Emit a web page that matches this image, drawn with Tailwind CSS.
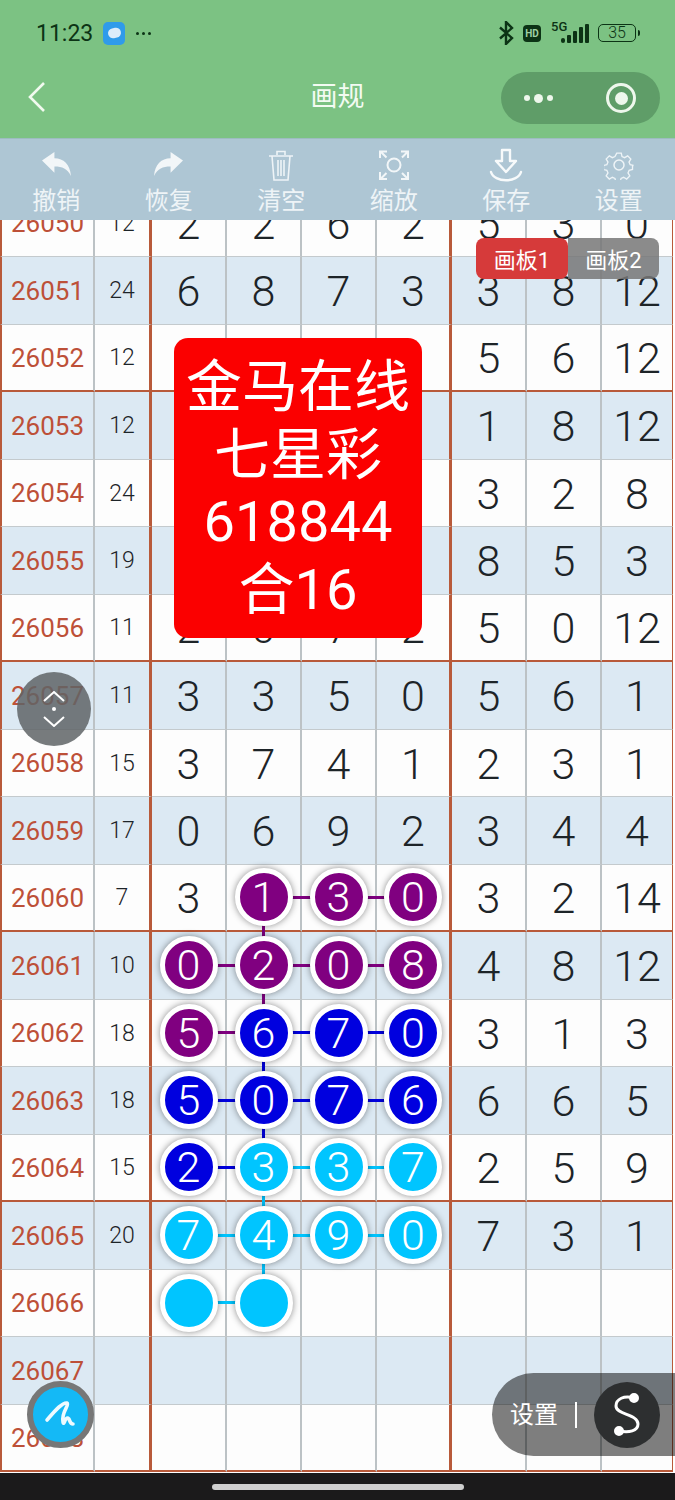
<!DOCTYPE html>
<html lang="zh">
<head>
<meta charset="utf-8">
<title>画规</title>
<script src="https://cdn.jsdelivr.net/npm/@tailwindcss/browser@4"></script>
</head>
<body class="bg-white">
<div class="relative flex flex-col w-[675px] h-[1500px] overflow-hidden font-['Roboto','Noto_Sans_CJK_SC',sans-serif]">

  <!-- status bar + title -->
  <header class="bg-[#7cc283] h-[138px] shrink-0 flex flex-col">
    <div class="flex items-center justify-between h-[66px] pl-[36px] pr-[35px] text-[#0c3315]">
      <div class="flex items-center gap-[10px]">
        <span class="text-[23px] leading-none">11:23</span>
        <span class="w-[22px] h-[23px] rounded-[5px] bg-[#2f9bea] flex items-center justify-center">
          <span class="w-[13px] h-[10px] rounded-full bg-[#dcecfa] -rotate-12"></span>
        </span>
        <span class="flex gap-[3px] ml-[1px]">
          <i class="w-[3px] h-[3px] rounded-full bg-[#0c3315]"></i>
          <i class="w-[3px] h-[3px] rounded-full bg-[#0c3315]"></i>
          <i class="w-[3px] h-[3px] rounded-full bg-[#0c3315]"></i>
        </span>
      </div>
      <div class="flex items-center">
        <svg width="15" height="24" viewBox="0 0 15 24" fill="none" stroke="#0c3315" stroke-width="2.4" class="mr-[9px]"><path d="M1 6.5 13 17 7 23V1l6 6L1 17.5"/></svg>
        <span class="w-[18px] h-[17px] rounded-[4px] bg-[#0c3315] text-[#9fd0a4] text-[10px] font-bold leading-[17px] text-center mr-[10px]">HD</span>
        <span class="relative w-[10px] h-[24px]"><span class="absolute left-0 -top-[1px] text-[13px] font-medium leading-none">5G</span></span>
        <svg width="28" height="20" viewBox="0 0 28 20" fill="#0c3315" class="mr-[9px] mt-[2px]"><rect x="0" y="14" width="4" height="5" rx="2"/><rect x="6" y="11" width="4" height="8" rx="1"/><rect x="12" y="7" width="4" height="12" rx="1"/><rect x="18" y="3" width="4" height="16" rx="1"/><rect x="24" y="0" width="4" height="19" rx="1"/></svg>
        <span class="w-[38px] h-[18px] rounded-[5px] border-[1.5px] border-[#0c3315] text-[16px] leading-[15px] text-center font-light">35</span>
        <span class="w-[2px] h-[6px] ml-[2px] rounded-r-sm bg-[#0c3315]"></span>
      </div>
    </div>
    <nav class="relative flex items-center justify-center h-[62px] text-[#f3fbf2]">
      <svg class="absolute left-[27px] top-[15px]" width="20" height="32" viewBox="0 0 20 32" fill="none" stroke="#f1faef" stroke-width="2.6"><path d="M17 2 3 16l14 14"/></svg>
      <span class="text-[27px] leading-none">画规</span>
      <div class="absolute left-[501px] top-[6px] w-[159px] h-[52px] rounded-full bg-[#5f9d68] flex items-center justify-between pl-[23px] pr-[24px]">
        <span class="flex items-center gap-[4px]">
          <i class="w-[6px] h-[6px] rounded-full bg-[#eef7ec]"></i>
          <i class="w-[9px] h-[9px] rounded-full bg-[#eef7ec]"></i>
          <i class="w-[6px] h-[6px] rounded-full bg-[#eef7ec]"></i>
        </span>
        <span class="w-[30px] h-[30px] rounded-full border-[3px] border-[#eef7ec] flex items-center justify-center">
          <i class="w-[13px] h-[13px] rounded-full bg-[#eef7ec]"></i>
        </span>
      </div>
    </nav>
  </header>

  <!-- toolbar -->
  <div class="bg-[#aec6d4] h-[82px] shrink-0 grid grid-cols-6 text-[#eef4f7] border-t border-[#9dbcc0]">
    <div class="flex flex-col items-center pt-[12px]">
      <svg width="29" height="25" viewBox="0 0 28 24" fill="#f2f6f8"><path d="M0 9 12 1v6c9 0 15 6 16 17-4-7-8-9-16-9v6Z"/></svg>
      <span class="text-[24px] leading-none mt-[13px]">撤销</span>
    </div>
    <div class="flex flex-col items-center pt-[12px]">
      <svg width="29" height="25" viewBox="0 0 28 24" fill="#f2f6f8"><path d="M28 9 16 1v6C7 7 1 13 0 24c4-7 8-9 16-9v6Z"/></svg>
      <span class="text-[24px] leading-none mt-[13px]">恢复</span>
    </div>
    <div class="flex flex-col items-center pt-[11px]">
      <svg width="26" height="31" viewBox="0 0 26 31" fill="none" stroke="#eef4f7" stroke-width="1.6"><path d="M1 6h24M9 5V1.500h8V5M4 6l2 24h14l2-24M10 10v16M13 10v16M16 10v16"/></svg>
      <span class="text-[24px] leading-none mt-[8px]">清空</span>
    </div>
    <div class="flex flex-col items-center pt-[11px]">
      <svg width="30" height="30" viewBox="0 0 30 30" fill="none" stroke="#f2f6f8" stroke-width="2"><circle cx="15" cy="15" r="6.500"/><path d="M1 8V1.500h7M1.500 1.500l6 6M22 1.500h7V8M29 1.500l-6 6M1 22v7h7M1.500 29l6-6M22 29h7v-7M29 29l-6-6"/></svg>
      <span class="text-[24px] leading-none mt-[9px]">缩放</span>
    </div>
    <div class="flex flex-col items-center pt-[9px]">
      <svg width="36" height="34" viewBox="0 0 36 34" fill="none" stroke="#f7fafb" stroke-width="2.400" stroke-linejoin="round" stroke-linecap="round"><path d="M14 2h8v11h6L18 24 8 13h6ZM3 24c3 11 27 11 30 0"/></svg>
      <span class="text-[24px] leading-none mt-[7px]">保存</span>
    </div>
    <div class="flex flex-col items-center pt-[11px]">
      <svg width="30" height="30" viewBox="0 0 24 24" fill="none" stroke="#eef4f7" stroke-width="1.200"><circle cx="12" cy="12" r="4"/><path d="M10 1.500h4l.7 3 2.300 1 2.700-1.600 2.800 2.800-1.600 2.700 1 2.300 3 .7v0h-.9v3.600l-3 .7-1 2.300 1.600 2.700-2.800 2.800-2.700-1.600-2.300 1-.7 3h-4l-.7-3-2.300-1-2.700 1.600-2.800-2.800 1.600-2.700-1-2.300-3-.7v-3.600l3-.7 1-2.300-1.600-2.700 2.800-2.800 2.700 1.600 2.300-1Z" transform="translate(1.200 1.200) scale(.9)"/></svg>
      <span class="text-[24px] leading-none mt-[9px]">设置</span>
    </div>
  </div>

  <!-- table -->
  <main class="relative flex-1 overflow-hidden">
    <div id="board" class="grid grid-cols-[95px_57px_repeat(6,75px)_71px] auto-rows-[67.5px] -mt-[30.5px]"></div>
  </main>

  <!-- nav bar -->
  <footer class="h-[27px] shrink-0 bg-[#1b1a1b] flex justify-center pt-[11px]">
    <span class="w-[252px] h-[6px] rounded-full bg-[#cfcfcf]"></span>
  </footer>

  <!-- tabs -->
  <div class="absolute left-[476px] top-[238px] z-30 flex text-white text-[22px] leading-[46px]">
    <span class="w-[92px] h-[41px] rounded-[8px] bg-[#d63a3a] text-center">画板1</span>
    <span class="w-[91px] h-[41px] rounded-r-[8px] bg-[#777]/85 text-center">画板2</span>
  </div>

  <!-- red notice -->
  <div class="absolute left-[174px] top-[338px] z-30 w-[248px] h-[300px] rounded-[14px] bg-[#fb0000] text-white text-[56px] leading-[67.5px] text-center pt-[16px]">
    金马在线<br>七星彩<br>618844<br>合16
  </div>

  <!-- floating scroll button -->
  <div class="absolute left-[17px] top-[672px] z-30 w-[74px] h-[74px] rounded-full bg-[#5f6466]/85 flex flex-col items-center justify-center">
    <svg width="22" height="11" viewBox="0 0 22 11" fill="none" stroke="#fff" stroke-width="2"><path d="M1 10 11 1l10 9"/></svg>
    <i class="w-[4px] h-[4px] my-[5px] rounded-full bg-white"></i>
    <svg width="22" height="11" viewBox="0 0 22 11" fill="none" stroke="#fff" stroke-width="2"><path d="M1 1l10 9 10-9"/></svg>
  </div>

  <!-- pen button -->
  <div class="absolute left-[27px] top-[1381px] z-30 w-[67px] h-[67px] rounded-full bg-[#14b9f6] border-[6px] border-[#777] flex items-center justify-center">
    <svg width="34" height="30" viewBox="0 0 34 30" fill="none" stroke="#eefaff" stroke-width="3.600" stroke-linecap="round" stroke-linejoin="round"><path d="M3 20 C10 12 18 2 23 3 C26 5 17 12 19 22 C20 27 21 15 25 19 C26 21 26 24 29 24"/></svg>
  </div>

  <!-- settings pill -->
  <div class="absolute left-[492px] top-[1373px] z-30 w-[183px] h-[83px] rounded-l-[42px] bg-black/50 flex items-center text-white">
    <span class="text-[24px] leading-none ml-[18px]">设置</span>
    <span class="w-[1.500px] h-[26px] bg-white ml-[17px]"></span>
    <span class="w-[66px] h-[66px] rounded-full bg-[#2d2f30] ml-[17px] flex items-center justify-center">
      <svg width="34" height="44" viewBox="0 0 34 44" fill="none" stroke="#fff" stroke-width="3" stroke-linecap="round"><path d="M24 5C14 2 6 6 6 13c0 9 22 8 22 18 0 7-9 9-19 7"/><circle cx="24" cy="5" r="3.500" fill="#fff"/><circle cx="9" cy="38" r="3.500" fill="#fff"/></svg>
    </span>
  </div>
</div>

<script>
  const BALL = {
    p: "bg-[#800080]",
    u: "bg-[#0000df]",
    c: "bg-[#00c5ff]",
  };
  const b = (n, c, h, v) => ({ n, c, h, v });

  const rows = [
    ["26050", "12", ["2", "2", "6", "2"], ["5", "3", "0"]],
    ["26051", "24", ["6", "8", "7", "3"], ["3", "8", "12"]],
    ["26052", "12", ["", "", "", ""], ["5", "6", "12"]],
    ["26053", "12", ["", "", "", ""], ["1", "8", "12"]],
    ["26054", "24", ["", "", "", ""], ["3", "2", "8"]],
    ["26055", "19", ["", "", "", ""], ["8", "5", "3"]],
    ["26056", "11", ["2", "0", "7", "2"], ["5", "0", "12"]],
    ["26057", "11", ["3", "3", "5", "0"], ["5", "6", "1"]],
    ["26058", "15", ["3", "7", "4", "1"], ["2", "3", "1"]],
    ["26059", "17", ["0", "6", "9", "2"], ["3", "4", "4"]],
    ["26060", "7", ["3", b("1", "p", "p", "p"), b("3", "p", "p"), b("0", "p")], ["3", "2", "14"]],
    ["26061", "10", [b("0", "p", "p"), b("2", "p", "p", "p"), b("0", "p", "p"), b("8", "p")], ["4", "8", "12"]],
    ["26062", "18", [b("5", "p", "p"), b("6", "u", "u", "u"), b("7", "u", "u"), b("0", "u")], ["3", "1", "3"]],
    ["26063", "18", [b("5", "u", "u"), b("0", "u", "u", "u"), b("7", "u", "u"), b("6", "u")], ["6", "6", "5"]],
    ["26064", "15", [b("2", "u", "u"), b("3", "c", "c", "c"), b("3", "c", "c"), b("7", "c")], ["2", "5", "9"]],
    ["26065", "20", [b("7", "c", "c"), b("4", "c", "c", "c"), b("9", "c", "c"), b("0", "c")], ["7", "3", "1"]],
    ["26066", "", [b("", "c", "c"), b("", "c"), "", ""], ["", "", ""]],
    ["26067", "", ["", "", "", ""], ["", "", ""]],
    ["26068", "", ["", "", "", ""], ["", "", ""]],
  ];

  const cell = (row, rightEdge, inner, extra) => {
    const stripe = row % 2 ? "bg-[#dce9f3]" : "bg-[#fdfdfd]";
    const bottom = row % 4 === 2 ? "border-b-2 border-b-[#b85a3a]" : "border-b border-b-[#c4cacd]";
    return `<div class="relative flex items-center justify-center ${stripe} ${bottom} ${rightEdge} ${extra}">${inner}</div>`;
  };

  const ball = (d) => {
    const h = d.h ? `<i class="absolute left-1/2 top-1/2 -mt-[1.500px] w-[75px] h-[3px] z-[1] ${BALL[d.h]}"></i>` : "";
    const v = d.v ? `<i class="absolute left-1/2 top-1/2 -ml-[1.500px] w-[3px] h-[67.5px] z-[1] ${BALL[d.v]}"></i>` : "";
    return `${h}${v}<span class="relative z-[2] flex items-center justify-center w-[58px] h-[58px] rounded-full border-[5px] border-white shadow-[0_0_7px_rgba(0,0,0,0.45)] text-white ${BALL[d.c]}">${d.n}</span>`;
  };

  const text = (t) => `<span class="pt-[2px]">${t}</span>`;

  const GRAY = "border-r-2 border-r-[#bcc2c5]";
  const RED = "border-r-[3px] border-r-[#b85a3a]";
  const big = "text-[43px] font-light text-[#1d2428]";

  document.getElementById("board").innerHTML = rows.map(([id, sum, left, right], r) => [
    cell(r, GRAY, text(id), "border-l-2 border-l-[#b85a3a] text-[26px] text-[#bd5038]"),
    cell(r, RED, text(sum), "text-[23px] font-light text-[#1d2428]"),
    ...left.map((d, i) => cell(r, i === 3 ? RED : GRAY, typeof d === "string" ? text(d) : ball(d), big)),
    ...right.map((d, i) => cell(r, i === 2 ? "border-r border-r-[#b85a3a]" : GRAY, text(d), big)),
  ].join("")).join("");
</script>
</body>
</html>
